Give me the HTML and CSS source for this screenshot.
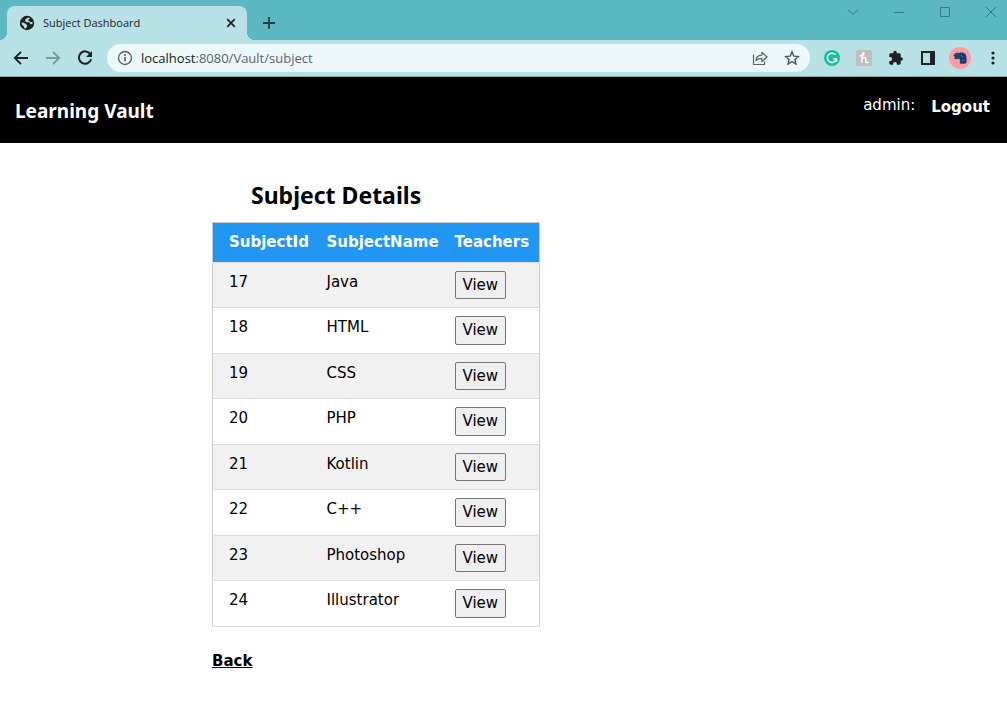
FILE: index.html
```html
<!DOCTYPE html>
<html lang="en">
<head>
<meta charset="utf-8">
<title>Subject Dashboard</title>
<link rel="stylesheet" href="styles.css">
</head>
<body>
<div class="browser">
  <div class="tabstrip">
    <div class="tab">
      <svg class="globe" width="16" height="16" viewBox="0 0 16 16"><circle cx="8" cy="8" r="7.2" fill="#202124"/><path d="M9.300 2.600L6.500 4.200 6 6l1.600 1 3 .5.7 1.800 2-.3.4-2-2.300.2-2-1.700.2-1.200 1.700-.8zM2.400 7.600l2 .2 2.200 1 1.600 1.500-.4 1.500-1 1.700-1.700-.4-.1-1.600L3.300 10z" fill="#b8e1e5"/></svg>
      <span class="tab-title">Subject Dashboard</span>
      <button class="icon-button" aria-label="Close tab"><svg width="10" height="10" viewBox="0 0 10 10"><path d="M1.200 1.200l7.600 7.600M8.800 1.200L1.200 8.800" stroke="#202124" stroke-width="1.700"/></svg></button>
    </div>
    <button class="icon-button new-tab" aria-label="New tab"><svg width="12" height="12" viewBox="0 0 12 12"><path d="M6 0v12M0 6h12" stroke="#263e42" stroke-width="1.800"/></svg></button>
    <div class="window-controls">
      <button class="icon-button" aria-label="Search tabs"><svg width="12" height="12" viewBox="0 0 12 12"><path d="M1 3.500l5 5 5-5" fill="none" stroke="#37777e"/></svg></button>
      <button class="icon-button" aria-label="Minimize"><svg width="12" height="12" viewBox="0 0 12 12"><path d="M1 6.500h10" stroke="#37777e"/></svg></button>
      <button class="icon-button" aria-label="Maximize"><svg width="12" height="12" viewBox="0 0 12 12"><path d="M1.500 1.500h9v9h-9z" fill="none" stroke="#37777e"/></svg></button>
      <button class="icon-button" aria-label="Close window"><svg width="12" height="12" viewBox="0 0 12 12"><path d="M1 1l10 10M11 1L1 11" stroke="#37777e"/></svg></button>
    </div>
  </div>
  <div class="toolbar">
    <div class="nav-buttons">
      <button class="icon-button" aria-label="Back"><svg width="16" height="16" viewBox="0 0 16 16"><path d="M15 8H2M8 1.800L1.800 8 8 14.200" fill="none" stroke="#202124" stroke-width="1.900"/></svg></button>
      <button class="icon-button" aria-label="Forward"><svg width="16" height="16" viewBox="0 0 16 16"><path d="M1 8h13M8 1.800L14.200 8 8 14.200" fill="none" stroke="#7d979c" stroke-width="1.900"/></svg></button>
      <button class="icon-button" aria-label="Reload"><svg width="16" height="16" viewBox="0 0 16 16"><path d="M13.400 4.300A6.200 6.200 0 1 0 14.100 9.200" fill="none" stroke="#202124" stroke-width="2"/><path d="M15 1v6H9z" fill="#202124"/></svg></button>
    </div>
    <div class="address">
      <svg width="16" height="16" viewBox="0 0 16 16"><circle cx="8" cy="8" r="6.500" fill="none" stroke="#5f6368" stroke-width="1.400"/><path d="M8 7v4.500M8 4.300v1.600" stroke="#5f6368" stroke-width="1.600"/></svg>
      <span class="url"><span class="host">localhost</span>:8080/Vault/subject</span>
      <button class="icon-button" aria-label="Share"><svg width="16" height="16" viewBox="0 0 16 16"><path d="M1.500 4.500v10h11v-3.300M4 10.500C4.300 7 6.500 5.300 9.800 5.200V2.300L15 7l-5.200 4.500V8.300C7 8.300 5.300 9 4 10.500z" fill="none" stroke="#5f6368" stroke-width="1.200" stroke-linejoin="round"/></svg></button>
      <button class="icon-button" aria-label="Bookmark"><svg width="16" height="16" viewBox="0 0 16 16"><path d="M8 1.900l1.800 4.200 4.600.4-3.500 3 1.100 4.500L8 11.600 4 14l1.100-4.500-3.500-3 4.600-.4z" fill="none" stroke="#4e5b60" stroke-width="1.400"/></svg></button>
    </div>
    <div class="extensions">
      <button class="icon-button" aria-label="Grammar"><svg width="16" height="16" viewBox="0 0 16 16"><circle cx="8" cy="8" r="8" fill="#15c39a"/><path d="M11.500 4.900A4.600 4.600 0 1 0 12.500 8.700H9M12.500 8.700v3" fill="none" stroke="#fff" stroke-width="1.400"/></svg></button>
      <button class="icon-button" aria-label="Coupons"><svg width="16" height="16" viewBox="0 0 16 16"><rect width="16" height="16" rx="2" fill="#c0bfc0"/><path d="M3.800 5.500C6 6.500 8.500 4.500 7.800 3 7 1.800 5.800 4 5.800 13M5.800 9.500c.8-2.200 4-2.700 4-.5v2.500c0 1.500 1.300 1.500 2.500.5" fill="none" stroke="#fff" stroke-width="1.400"/></svg></button>
      <button class="icon-button" aria-label="Extensions"><svg width="16" height="16" viewBox="0 0 16 16"><path d="M13.400 7.300h-.7V4.700c0-.8-.6-1.400-1.400-1.400H8.800v-.8a1.800 1.800 0 0 0-3.600 0v.8H2.700c-.8 0-1.400.6-1.400 1.400v2.400h.9a1.900 1.900 0 0 1 0 3.800h-.9v2.400c0 .8.600 1.400 1.400 1.400h2.400v-.9a1.900 1.900 0 0 1 3.800 0v.9h2.400c.8 0 1.400-.6 1.400-1.400v-2.500h.7a1.800 1.800 0 0 0 0-3.500z" fill="#202124"/></svg></button>
      <button class="icon-button" aria-label="Side panel"><svg width="16" height="16" viewBox="0 0 16 16"><path d="M1 1h14v14H1zM3 3v10h7V3z" fill="#202124" fill-rule="evenodd"/></svg></button>
      <button class="icon-button" aria-label="Profile"><svg width="22" height="22" viewBox="0 0 22 22"><circle cx="11" cy="11" r="11" fill="#ff9ba3"/><path d="M4.500 8.500L6 6.500l2.500-1 1.500.7 1-.8h3l2.500 1.600 1 3v5.500l-1.500 1.300h-4.500l-1-1.800.8-1.300-1.300-2.200-3 .7L5 11.500l1-1.300z" fill="#173f70"/><path d="M7.500 8H9M12 8l2 2M13 13.500h2.500" stroke="#2a74a6"/></svg></button>
      <button class="icon-button menu" aria-label="Menu"><svg width="4" height="16" viewBox="0 0 4 16"><g fill="#202124"><circle cx="2" cy="3" r="1.600"/><circle cx="2" cy="8" r="1.600"/><circle cx="2" cy="13" r="1.600"/></g></svg></button>
    </div>
  </div>
</div>
<header class="site-header">
  <h1 class="brand">Learning Vault</h1>
  <div class="account"><span class="user">admin:</span><a class="logout" href="#">Logout</a></div>
</header>
<main class="content">
  <h2 class="heading">Subject Details</h2>
  <table class="subjects">
    <thead><tr><th class="col-id">SubjectId</th><th class="col-name">SubjectName</th><th class="col-teachers">Teachers</th></tr></thead>
    <tbody>
      <tr><td>17</td><td>Java</td><td><button class="view">View</button></td></tr>
      <tr><td>18</td><td>HTML</td><td><button class="view">View</button></td></tr>
      <tr><td>19</td><td>CSS</td><td><button class="view">View</button></td></tr>
      <tr><td>20</td><td>PHP</td><td><button class="view">View</button></td></tr>
      <tr><td>21</td><td>Kotlin</td><td><button class="view">View</button></td></tr>
      <tr><td>22</td><td>C++</td><td><button class="view">View</button></td></tr>
      <tr><td>23</td><td>Photoshop</td><td><button class="view">View</button></td></tr>
      <tr><td>24</td><td>Illustrator</td><td><button class="view">View</button></td></tr>
    </tbody>
  </table>
  <a class="back" href="#">Back</a>
</main>
</body>
</html>
```

FILE: styles.css
```css
* { box-sizing: border-box; }

body {
  margin: 0;
  background: #fff;
  color: #000;
  font: 15px/1.5 Verdana, "DejaVu Sans", sans-serif;
}

svg { display: block; flex: none; }

.icon-button {
  display: flex;
  align-items: center;
  justify-content: center;
  padding: 0;
  border: 0;
  background: none;
}

/* Browser frame */
.browser {
  background: #b8e1e5;
  border-bottom: 1px solid #84a9ad;
  font-family: "Open Sans", sans-serif;
}

.tabstrip {
  display: flex;
  height: 40px;
  padding-left: 7px;
  background: #5bb8c1;
}

.tab {
  position: relative;
  display: flex;
  align-items: center;
  gap: 8px;
  width: 240px;
  margin-top: 6px;
  padding: 0 11px 0 12px;
  border-radius: 8px 8px 0 0;
  background: #b8e1e5;
}

.tab::before,
.tab::after {
  content: "";
  position: absolute;
  bottom: 0;
  width: 8px;
  height: 8px;
}

.tab::before {
  right: 100%;
  background: radial-gradient(circle at 0 0, transparent 8px, #b8e1e5 8px);
}

.tab::after {
  left: 100%;
  background: radial-gradient(circle at 100% 0, transparent 8px, #b8e1e5 8px);
}

.tab-title {
  flex: 1;
  color: #202124;
  font-size: 11px;
}

.new-tab { margin: 6px 0 0 16px; }

.window-controls {
  display: flex;
  gap: 34px;
  height: 24px;
  margin-left: auto;
  padding-right: 10px;
}

.toolbar {
  display: flex;
  align-items: center;
  height: 36px;
  padding: 0 12px 0 13px;
}

.nav-buttons { display: flex; gap: 16px; }

.address {
  display: flex;
  flex: 1;
  align-items: center;
  gap: 16px;
  height: 28px;
  margin: 0 14px;
  padding: 0 10px;
  border-radius: 14px;
  background: #ecf8f9;
}

.url {
  flex: 1;
  margin-left: -8px;
  color: #5f6368;
  font-size: 13px;
  line-height: 20px;
}

.host { color: #202124; }

.extensions {
  display: flex;
  align-items: center;
  gap: 16px;
}

.extensions [aria-label="Profile"] { margin: 0 -3px; }
.menu { margin-left: 7px; }

/* Page */
.site-header {
  display: flex;
  justify-content: space-between;
  padding: 17px 17px 15px 15px;
  background: #000;
  color: #fff;
}

.brand {
  margin: 0;
  font: bold 19px/34px "Noto Sans", sans-serif;
}

.account { display: flex; gap: 16px; }

.logout {
  margin-top: 2px;
  color: #fff;
  font-weight: bold;
  text-decoration: none;
}

.content { padding: 36px 16px 40px 212px; }

.heading {
  margin: 0 0 10px;
  padding-left: 39px;
  font: bold 23px/33px "Noto Sans", sans-serif;
}

.subjects {
  width: 328px;
  border: 1px solid #ccc;
  border-collapse: collapse;
  table-layout: fixed;
}

.subjects tr { border-bottom: 1px solid #ddd; }
.subjects thead tr { background: #2196f3; color: #fff; }
.subjects tbody tr:nth-child(odd) { background: #f1f1f1; }

.subjects th,
.subjects td {
  padding: 8px;
  text-align: left;
  vertical-align: top;
}

.subjects th:first-child,
.subjects td:first-child { padding-left: 16px; }

.subjects .col-id { width: 106px; }
.subjects .col-name { width: 128px; }

.view {
  display: block;
  padding: 2px 7px;
  border: 1px solid #767676;
  border-radius: 2px;
  background: #efefef;
  color: #000;
  font: inherit;
}

.back {
  display: inline-block;
  margin-top: 23px;
  color: #000;
  font-weight: bold;
}
```
